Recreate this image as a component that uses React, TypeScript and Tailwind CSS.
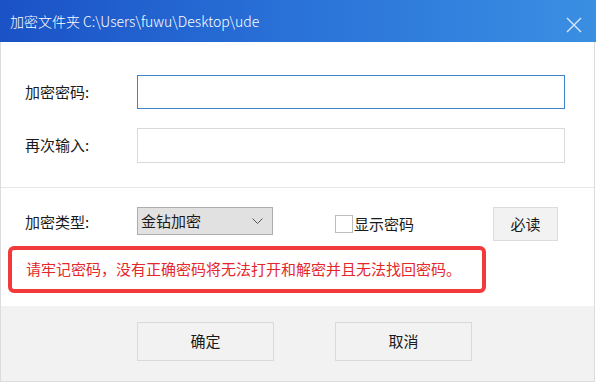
export default function App() {
  return (
    <div className="w-[596px] h-[383px] bg-white overflow-hidden font-['Noto_Sans_CJK_SC',sans-serif] text-[#1a1a1a]">
      {/* Title bar */}
      <div className="h-[42px] flex items-center justify-between pl-[10px] pr-[14px] bg-gradient-to-r from-[#1b52c6] via-[#2a72d8] to-[#3a8fe2]">
        <span className="text-white text-[14px] font-light">加密文件夹 C:\Users\fuwu\Desktop\ude</span>
        <svg width="16" height="16" viewBox="0 0 16 16" className="mt-[8px]">
          <path d="M1 1 L15 15 M15 1 L1 15" stroke="#dbe8fa" strokeWidth="1.4" fill="none" />
        </svg>
      </div>

      <div className="w-[595px] border-x border-[#dcdcdc]">
        {/* Password fields */}
        <div className="h-[146px] pt-[33px] pl-[24px] flex flex-col gap-[19px] border-b border-[#e6e6e6]">
          <div className="flex items-center">
            <span className="w-[112px] text-[15px]">加密密码:</span>
            <input type="password" className="w-[428px] h-[34px] border border-[#3b86ca] bg-white outline-none" />
          </div>
          <div className="flex items-center">
            <span className="w-[112px] text-[15px]">再次输入:</span>
            <input type="password" className="w-[428px] h-[35px] border border-[#d9d9d9] bg-white outline-none" />
          </div>
        </div>

        {/* Options */}
        <div className="h-[118px] pt-[19px]">
          <div className="flex items-start pl-[24px]">
            <span className="w-[112px] text-[15px] leading-[28px] mt-[1px]">加密类型:</span>
            <div className="w-[136px] h-[28px] border border-[#adadad] bg-[#e1e1e1] flex items-center justify-between pl-[3px] pr-[9px] text-[15px]">
              <span>金钻加密</span>
              <svg width="11" height="6" viewBox="0 0 11 6">
                <path d="M0.5 0.5 L5.5 5.5 L10.5 0.5" stroke="#555" strokeWidth="1" fill="none" />
              </svg>
            </div>
            <label className="ml-[62px] mt-[8px] flex items-center text-[15px]">
              <span className="w-[18px] h-[18px] border border-[#bdbdbd] bg-white" />
              <span className="ml-[1px] leading-[18px]">显示密码</span>
            </label>
            <button className="ml-[79px] w-[65px] h-[34px] border border-[#dcdcdc] bg-[#f2f2f2] text-[15px]">必读</button>
          </div>
          <div className="ml-[7px] mt-[5px] w-[478px] h-[47px] border-[4px] border-[#f33a3a] rounded-[6px] flex items-center pl-[14px]">
            <span className="text-[15px] text-[#e3272b]">请牢记密码，没有正确密码将无法打开和解密并且无法找回密码。</span>
          </div>
        </div>

        {/* Footer */}
        <div className="h-[76px] bg-[#f2f2f2] border-b border-[#dcdcdc] flex items-start gap-[61px] pl-[136px] pt-[16px]">
          <button className="w-[137px] h-[39px] border border-[#d9d9d9] bg-[#f2f2f2] text-[15px]">确定</button>
          <button className="w-[137px] h-[39px] border border-[#d9d9d9] bg-[#f2f2f2] text-[15px]">取消</button>
        </div>
      </div>
    </div>
  );
}
